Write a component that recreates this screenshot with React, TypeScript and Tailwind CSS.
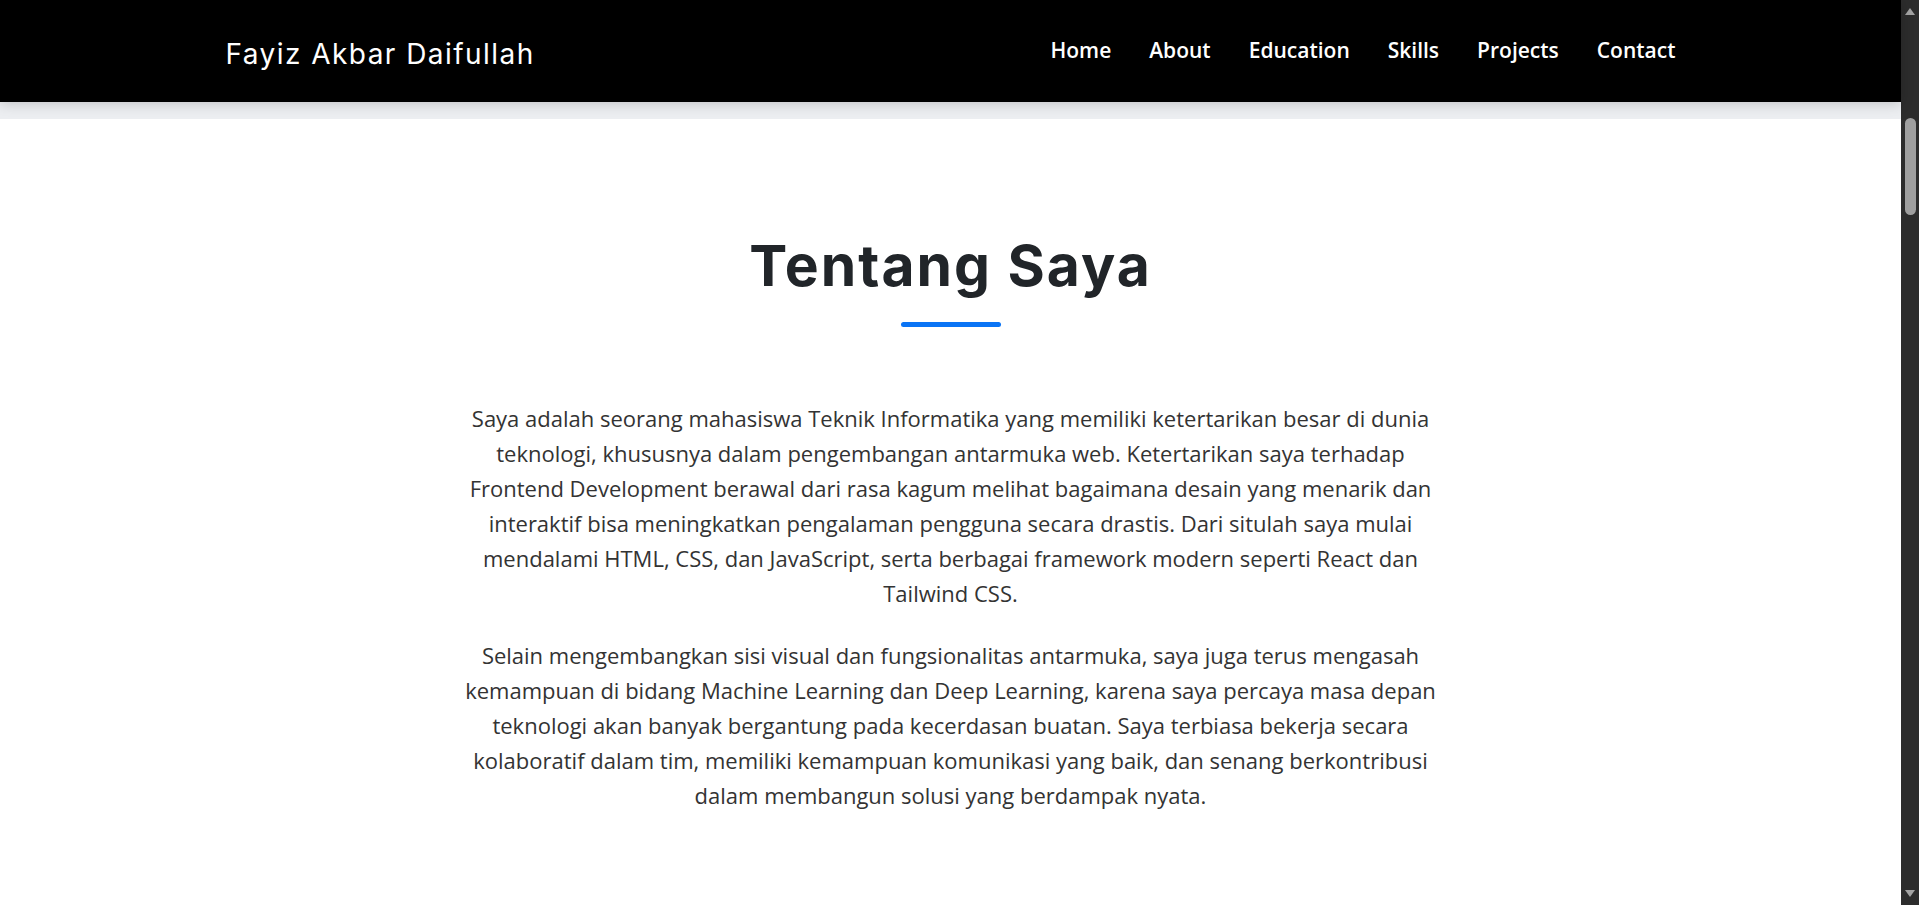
import React from 'react';

const links = ['Home', 'About', 'Education', 'Skills', 'Projects', 'Contact'];

function Navbar() {
  return (
    <nav className="relative z-10 h-[102px] shrink-0 bg-black shadow-[0_2px_12px_rgba(0,0,0,0.18)]">
      <div className="mx-auto flex h-full w-[1450px] items-center justify-between">
        <a href="#" className="mt-[6px] font-['Inter',sans-serif] text-[28px] font-normal tracking-[1.45px] text-white">
          Fayiz Akbar Daifullah
        </a>
        <ul className="flex items-center gap-[38px]">
          {links.map(l => (
            <li key={l}>
              <a href="#" className="font-['Open_Sans',sans-serif] text-[21px] font-semibold text-white">
                {l}
              </a>
            </li>
          ))}
        </ul>
      </div>
    </nav>
  );
}

function Scrollbar() {
  return (
    <div className="flex w-[18px] shrink-0 flex-col items-center bg-[#2c2c2c]">
      <div className="mt-[8px] h-0 w-0 border-x-[5px] border-b-[7px] border-x-transparent border-b-[#a3a3a3]" />
      <div className="ml-[1px] mt-[103px] h-[97px] w-[11px] rounded-full bg-[#9f9f9f]" />
      <div className="flex-1" />
      <div className="mb-[8px] h-0 w-0 border-x-[5px] border-t-[7px] border-x-transparent border-t-[#a3a3a3]" />
    </div>
  );
}

export default function App() {
  return (
    <div className="flex h-[905px] overflow-hidden bg-white">
      <div className="flex min-w-0 flex-1 flex-col">
        <Navbar />
        <div className="h-[17px] shrink-0 bg-[#eceef1]" />

        {/* About section */}
        <section className="flex flex-col items-center pt-[113px]">
          <h2 className="font-['Inter',sans-serif] text-[57px] font-bold leading-[1.2] tracking-[2px] text-[#212529]">
            Tentang Saya
          </h2>
          <div className="mt-[22px] h-[5px] w-[100px] rounded-full bg-[#0a74f5]" />

          <div className="mt-[74px] w-[982px] text-center font-['Open_Sans',sans-serif] text-[22px] leading-[35px] text-[#333333]">
            <p className="mb-[27px]">
              Saya adalah seorang mahasiswa Teknik Informatika yang memiliki ketertarikan besar di dunia teknologi,
              khususnya dalam pengembangan antarmuka web. Ketertarikan saya terhadap Frontend Development berawal dari
              rasa kagum melihat bagaimana desain yang menarik dan interaktif bisa meningkatkan pengalaman pengguna secara
              drastis. Dari situlah saya mulai mendalami HTML, CSS, dan JavaScript, serta berbagai framework modern seperti
              React dan Tailwind CSS.
            </p>
            <p>
              Selain mengembangkan sisi visual dan fungsionalitas antarmuka, saya juga terus mengasah kemampuan di bidang
              Machine Learning dan Deep Learning, karena saya percaya masa depan teknologi akan banyak bergantung pada
              kecerdasan buatan. Saya terbiasa bekerja secara kolaboratif dalam tim, memiliki kemampuan komunikasi yang
              baik, dan senang berkontribusi dalam membangun solusi yang berdampak nyata.
            </p>
          </div>
        </section>
      </div>
      <Scrollbar />
    </div>
  );
}
